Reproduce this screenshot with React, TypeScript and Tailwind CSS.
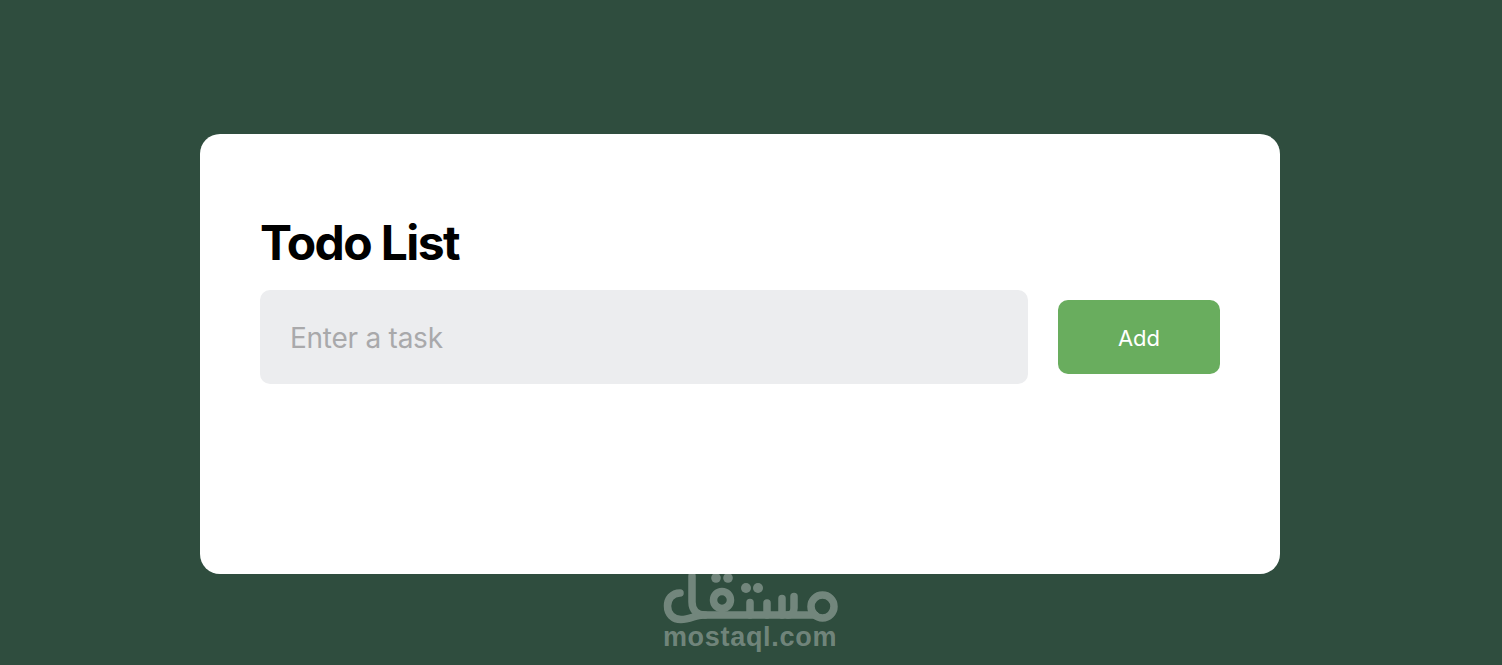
export default function App() {
  return (
    <div className="relative h-[665px] overflow-hidden bg-[#2f4d3e] pt-[134px] font-['Inter',sans-serif]">
      <div className="ml-[200px] h-[440px] w-[1080px] rounded-[20px] bg-white px-[60px] pt-[79px]">
        <h1 className="text-[48px] leading-[60px] font-[750] tracking-[-1.6px] text-black">Todo List</h1>
        <div className="mt-[17px] flex items-center gap-[30px]">
          <input
            type="text"
            placeholder="Enter a task"
            className="h-[94px] flex-1 rounded-[10px] bg-[#ecedef] px-[30px] pt-[2px] text-[28px] tracking-[-0.25px] outline-none placeholder:text-[#a9a9ab]"
          />
          <button className="h-[74px] w-[162px] rounded-[10px] bg-[#69ad5e] pt-[2px] text-[22px] font-normal text-white">Add</button>
        </div>
      </div>

      {/* watermark */}
      <div className="absolute top-[566px] left-[660px] flex w-[180px] flex-col items-center">
        <svg width="180" height="60" viewBox="660 566 180 60" fill="none">
          <g opacity="0.32" stroke="#ffffff" strokeWidth="7.5" strokeLinecap="round" strokeLinejoin="round">
            <path d="M680 593C672 593 667.5 599 667.5 606C667.5 614 673 619.5 681 619.5C690 619.5 696 615 703 615H815" />
            <path d="M692 576V602C692 610 697 615 705 615" />
            <circle cx="722" cy="600" r="8.5" />
            <circle cx="822.5" cy="606.5" r="11.5" />
            <path d="M750 602.5V615M767 603V615M782 598.5V615M794 596.5V608C794 612 792 615 788 615" />
            <g fill="#ffffff" stroke="none">
              <circle cx="716" cy="578" r="4.8" />
              <circle cx="728" cy="578" r="4.8" />
              <circle cx="746" cy="588" r="5" />
              <circle cx="758" cy="588" r="5" />
            </g>
          </g>
        </svg>
        <div className="mt-[-2px] text-[27px] leading-[26px] font-bold tracking-[0.7px] text-white/[0.32] font-['Liberation_Sans',sans-serif]">mostaql.com</div>
      </div>
    </div>
  )
}
